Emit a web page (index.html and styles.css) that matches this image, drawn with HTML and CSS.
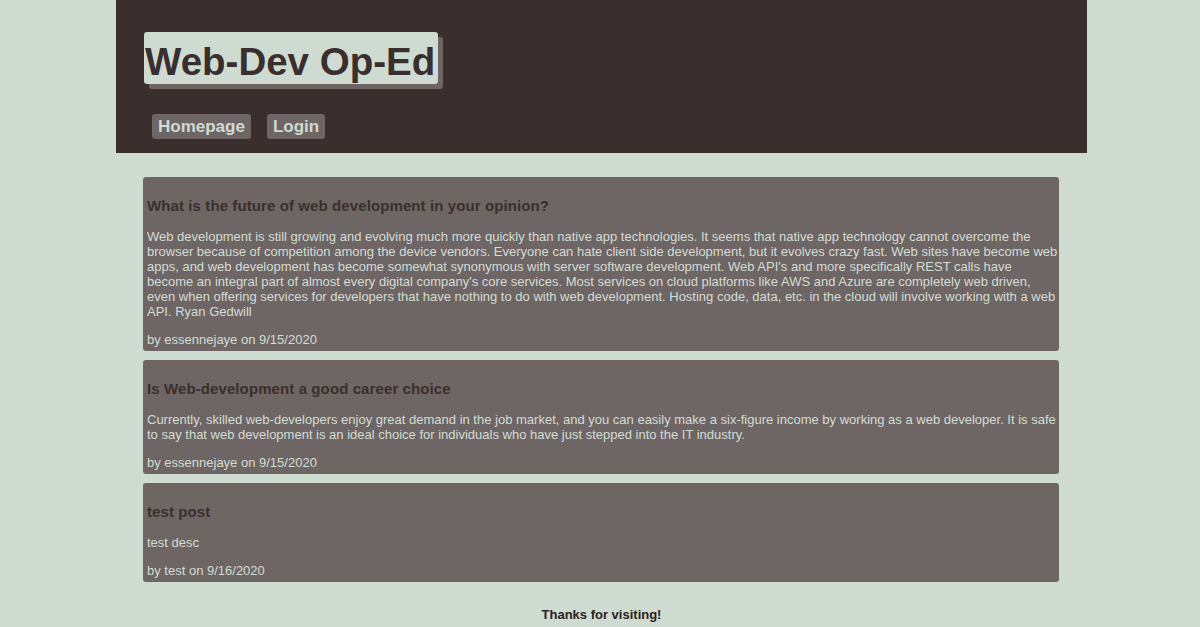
FILE: index.html
```html
<!DOCTYPE html>
<html lang="en">
<head>
<meta charset="utf-8">
<title>Web-Dev Op-Ed</title>
<link rel="stylesheet" href="styles.css">
</head>
<body>
<div class="page">
  <header class="site-header">
    <h1 class="site-title">Web-Dev Op-Ed</h1>
    <nav class="nav">
      <a class="nav-link" href="#">Homepage</a>
      <a class="nav-link" href="#">Login</a>
    </nav>
  </header>
  <main class="posts">
    <article class="post">
      <h3 class="post-title">What is the future of web development in your opinion?</h3>
      <p class="post-body">Web development is still growing and evolving much more quickly than native app technologies. It seems that native app technology cannot overcome the browser because of competition among the device vendors. Everyone can hate client side development, but it evolves crazy fast. Web sites have become web apps, and web development has become somewhat synonymous with server software development. Web API's and more specifically REST calls have become an integral part of almost every digital company's core services. Most services on cloud platforms like AWS and Azure are completely web driven, even when offering services for developers that have nothing to do with web development. Hosting code, data, etc. in the cloud will involve working with a web API. Ryan Gedwill</p>
      <p class="post-meta">by essennejaye on 9/15/2020</p>
    </article>
    <article class="post">
      <h3 class="post-title">Is Web-development a good career choice</h3>
      <p class="post-body">Currently, skilled web-developers enjoy great demand in the job market, and you can easily make a six-figure income by working as a web developer. It is safe to say that web development is an ideal choice for individuals who have just stepped into the IT industry.</p>
      <p class="post-meta">by essennejaye on 9/15/2020</p>
    </article>
    <article class="post">
      <h3 class="post-title">test post</h3>
      <p class="post-body">test desc</p>
      <p class="post-meta">by test on 9/16/2020</p>
    </article>
  </main>
  <footer class="site-footer">Thanks for visiting!</footer>
</div>
</body>
</html>
```
FILE: styles.css
```css
* { box-sizing: border-box; }

html, body {
  margin: 0;
  padding: 0;
}

body {
  background: #cedbd1;
  font-family: "Liberation Sans", Arial, sans-serif;
  color: #2a2222;
}

.page {
  margin: 0 113px 0 116px;
}

.site-header {
  background: #3a2f2e;
  padding: 32px 28px 14px 28px;
  height: 153px;
}

.site-title {
  display: inline-block;
  margin: 0;
  font-size: 38.5px;
  font-weight: bold;
  line-height: 42px;
  padding: 9px 3px 1px 1px;
  color: #3a2f2e;
  background: #cedbd1;
  border-radius: 3px;
  box-shadow: 5px 5px 0 #6e6664;
}

.nav {
  display: flex;
  gap: 16px;
  margin-top: 30px;
  padding-left: 8px;
}

.nav-link {
  display: inline-block;
  font-size: 17px;
  font-weight: bold;
  line-height: 19px;
  padding: 3px 6px;
  color: #cedbd1;
  background: #6e6664;
  border-radius: 3px;
  text-decoration: none;
}

.posts {
  display: flex;
  flex-direction: column;
  gap: 9px;
  padding: 24px 28px 0 27px;
}

.post {
  background: #6e6664;
  border-radius: 3px;
  padding: 5px 1px 4px 4px;
}

.post-title {
  margin: 15px 0;
  font-size: 15px;
  line-height: 17px;
  font-weight: bold;
  letter-spacing: 0.1px;
  color: #3a2f2e;
}

.post-body,
.post-meta {
  margin: 13px 0;
  font-size: 13px;
  line-height: 15px;
  color: #d2ddd4;
}

.post-meta {
  margin-bottom: 0;
}

.site-footer {
  text-align: center;
  font-size: 13px;
  font-weight: bold;
  line-height: 15px;
  padding-top: 25px;
  color: #2a2222;
}
```
